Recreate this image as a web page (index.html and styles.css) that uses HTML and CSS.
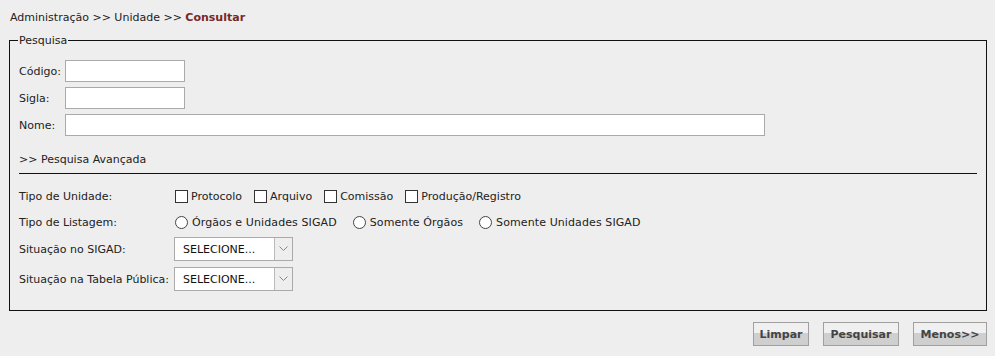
FILE: index.html
```html
<!doctype html>
<html>
    <head>
        <title>Consultar Unidade</title>
        <meta charset="utf-8">
        <link rel="stylesheet" href="styles.css">
    </head>
    <body>
        <p class="breadcrumb">Administração &gt;&gt; Unidade &gt;&gt; <b>Consultar</b></p>

        <form>
            <fieldset class="search">
                <legend>Pesquisa</legend>

                <div class="field"><label for="f_codigo">Código:</label><input type="text" id="f_codigo" class="short"></div>
                <div class="field"><label for="f_sigla">Sigla:</label><input type="text" id="f_sigla" class="short"></div>
                <div class="field"><label for="f_nome">Nome:</label><input type="text" id="f_nome" class="long"></div>

                <p class="advanced">&gt;&gt; Pesquisa Avançada</p>
                <hr>

                <div class="row first">
                    <span class="caption">Tipo de Unidade:</span>
                    <label class="opt"><input type="checkbox">Protocolo</label>
                    <label class="opt"><input type="checkbox">Arquivo</label>
                    <label class="opt"><input type="checkbox">Comissão</label>
                    <label class="opt"><input type="checkbox">Produção/Registro</label>
                </div>
                <div class="row">
                    <span class="caption">Tipo de Listagem:</span>
                    <label class="opt radio"><input type="radio" name="listagem">Órgãos e Unidades SIGAD</label>
                    <label class="opt radio"><input type="radio" name="listagem">Somente Órgãos</label>
                    <label class="opt radio"><input type="radio" name="listagem">Somente Unidades SIGAD</label>
                </div>
                <div class="row sel">
                    <span class="caption">Situação no SIGAD:</span>
                    <span class="select">
                        <select><option>SELECIONE...</option></select>
                        <span class="arrow"><svg width="9" height="6" viewBox="0 0 9 6"><path d="M0.5 0.5 L4.5 4.5 L8.5 0.5" fill="none" stroke="#888" stroke-width="1"/></svg></span>
                    </span>
                </div>
                <div class="row sel">
                    <span class="caption">Situação na Tabela Pública:</span>
                    <span class="select">
                        <select><option>SELECIONE...</option></select>
                        <span class="arrow"><svg width="9" height="6" viewBox="0 0 9 6"><path d="M0.5 0.5 L4.5 4.5 L8.5 0.5" fill="none" stroke="#888" stroke-width="1"/></svg></span>
                    </span>
                </div>
            </fieldset>

            <div class="buttons">
                <button type="reset" class="b-limpar">Limpar</button>
                <button type="button" class="b-pesquisar">Pesquisar</button>
                <button type="button" class="b-menos">Menos&gt;&gt;</button>
            </div>
        </form>
    </body>
</html>
```

FILE: styles.css
```css
body {
    margin: 0;
    background: #EEEEEE;
    color: #222;
    font: 11px/13px 'DejaVu Sans', Verdana, sans-serif;
}

.breadcrumb {
    margin: 0;
    padding: 11px 0 0 10px;
    height: 19px;
}

.breadcrumb b {
    color: #7A2727;
    font-weight: 600;
}

form {
    margin: 0;
}

fieldset.search {
    margin: 4px 8px 0 9px;
    padding: 13px 9px 17px 9px;
    border: 1px solid #111;
    min-width: 0;
}

fieldset.search legend {
    padding: 0 1px;
    margin-left: -1px;
}

.field {
    display: flex;
    align-items: center;
    height: 22px;
    margin-bottom: 5px;
}

.field label {
    width: 46px;
}

input[type=text] {
    box-sizing: border-box;
    height: 22px;
    border: 1px solid #AAAAAA;
    background: white;
    margin: 0;
    font: inherit;
}

input.short {
    width: 120px;
}

input.long {
    width: 700px;
}

.advanced {
    margin: 0;
    padding-top: 12px;
    height: 20px;
}

hr {
    border: 0;
    border-top: 1px solid #111;
    margin: 0;
    height: 0;
}

.row {
    display: flex;
    align-items: center;
    height: 26px;
}

.row.first {
    margin-top: 9px;
}

.caption {
    width: 155px;
    flex: none;
}

.opt {
    display: flex;
    align-items: center;
    margin-right: 11px;
}

.opt input {
    -webkit-appearance: none;
    appearance: none;
    margin: 0 3px 0 1px;
    width: 13px;
    height: 13px;
    background: white;
    border: 1px solid #333;
}

.opt.radio {
    margin-right: 15px;
    letter-spacing: 0.1px;
}

.opt.radio input {
    border-radius: 50%;
    border-color: #444;
    margin-right: 4px;
}

.row.sel {
    height: 28px;
}

.row.sel:nth-of-type(7) {
    margin-top: 2px;
}

.select {
    position: relative;
    display: inline-block;
    width: 119px;
    height: 24px;
}

.select select {
    -webkit-appearance: none;
    appearance: none;
    box-sizing: border-box;
    width: 100%;
    height: 100%;
    margin: 0;
    padding: 0 0 0 8px;
    border: 1px solid #AAAAAA;
    background: white;
    color: #111;
    font: inherit;
}

.select .arrow {
    position: absolute;
    top: 1px;
    right: 1px;
    bottom: 1px;
    width: 17px;
    background: #EEEEEE;
    border-left: 1px solid #BBBBBB;
    display: flex;
    align-items: center;
    justify-content: center;
}

.buttons {
    display: flex;
    justify-content: flex-end;
    gap: 14px;
    margin: 11px 8px 0 0;
}

.buttons button {
    box-sizing: border-box;
    height: 24px;
    border: 1px solid #A0A0A0;
    background: linear-gradient(#F0F0F0 0, #F0F0F0 45%, #CFCFCF 45%, #CFCFCF 100%);
    color: #444;
    font: bold 11px 'DejaVu Sans', Verdana, sans-serif;
    padding: 0;
}

.b-limpar {
    width: 56px;
}

.b-pesquisar {
    width: 76px;
}

.b-menos {
    width: 74px;
}
```
